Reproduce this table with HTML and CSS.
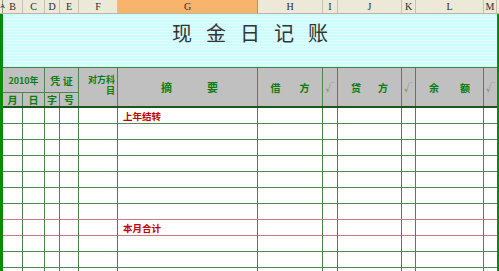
FILE: index.html
```html
<!DOCTYPE html>
<html>
<head>
<meta charset="utf-8">
<link rel="stylesheet" href="styles.css">
</head>
<body>
<div class="colbar">
  <div class="ch ch-a">A</div><div class="ch">B</div><div class="ch">C</div><div class="ch">D</div><div class="ch">E</div><div class="ch">F</div><div class="ch sel">G</div><div class="ch">H</div><div class="ch">I</div><div class="ch">J</div><div class="ch">K</div><div class="ch">L</div><div class="ch">M</div><div class="ch ch-end"></div>
</div>
<div class="sheet">
  <div class="title">现金日记账</div>
  <div class="thead">
    <div class="hc year">2010年</div>
    <div class="hc voucher">凭&nbsp;证</div>
    <div class="hc acct">对方科目</div>
    <div class="hc span2 summary"><span>摘</span><span>要</span></div>
    <div class="hc span2 money gap-h"><span>借</span><span>方</span></div>
    <div class="hc span2 tick">√</div>
    <div class="hc span2 money gap-j"><span>贷</span><span>方</span></div>
    <div class="hc span2 tick">√</div>
    <div class="hc span2 money gap-l"><span>余</span><span>额</span></div>
    <div class="hc span2 tick last">√</div>
    <div class="hc sub b">月</div>
    <div class="hc sub c">日</div>
    <div class="hc sub d">字</div>
    <div class="hc sub e">号</div>
  </div>
  <div class="tbody">
    <div class="row"><div></div><div></div><div></div><div></div><div></div><div class="memo">上年结转</div><div></div><div></div><div></div><div></div><div></div><div></div></div>
    <div class="row"><div></div><div></div><div></div><div></div><div></div><div></div><div></div><div></div><div></div><div></div><div></div><div></div></div>
    <div class="row"><div></div><div></div><div></div><div></div><div></div><div></div><div></div><div></div><div></div><div></div><div></div><div></div></div>
    <div class="row"><div></div><div></div><div></div><div></div><div></div><div></div><div></div><div></div><div></div><div></div><div></div><div></div></div>
    <div class="row"><div></div><div></div><div></div><div></div><div></div><div></div><div></div><div></div><div></div><div></div><div></div><div></div></div>
    <div class="row"><div></div><div></div><div></div><div></div><div></div><div></div><div></div><div></div><div></div><div></div><div></div><div></div></div>
    <div class="row red"><div></div><div></div><div></div><div></div><div></div><div></div><div></div><div></div><div></div><div></div><div></div><div></div></div>
    <div class="row red"><div></div><div></div><div></div><div></div><div></div><div class="memo">本月合计</div><div></div><div></div><div></div><div></div><div></div><div></div></div>
    <div class="row"><div></div><div></div><div></div><div></div><div></div><div></div><div></div><div></div><div></div><div></div><div></div><div></div></div>
    <div class="row"><div></div><div></div><div></div><div></div><div></div><div></div><div></div><div></div><div></div><div></div><div></div><div></div></div>
    <div class="row"><div></div><div></div><div></div><div></div><div></div><div></div><div></div><div></div><div></div><div></div><div></div><div></div></div>
  </div>
</div>
</body>
</html>
```
FILE: styles.css
```css
* { box-sizing: border-box; }
html, body { margin: 0; padding: 0; background: #fff; }
body { width: 499px; height: 271px; overflow: hidden; font-family: "Noto Sans CJK SC", "Liberation Sans", sans-serif; }

.colbar {
  display: grid;
  grid-template-columns: 3px 20px 22px 15px 19px 39px 140px 65px 15px 64px 14px 68px 13px 2px;
  height: 14px;
  background: #ece9d8;
  border-bottom: 1px solid #b9b6a4;
}
.ch {
  border-right: 1px solid #c6c2ae;
  font-family: "Liberation Serif", "DejaVu Serif", serif;
  font-size: 10px;
  line-height: 13px;
  color: #2a2a2a;
  text-align: center;
  overflow: hidden;
}
.ch-a { text-align: left; font-size: 7px; overflow: visible; border-right: 1px solid #9a978a; }
.ch-end { border-right: none; }
.ch.sel { background: #f8b46c; border-right-color: #b79060; }

.sheet {
  width: 499px;
  border-left: 3px solid #0a8a0a;
  border-right: 2px solid #0a8a0a;
}

.title {
  height: 53px;
  background: repeating-linear-gradient(to bottom, #cffcfc 0 2px, #e2ffff 2px 3px);
  text-align: center;
  font-size: 20px;
  line-height: 20px;
  letter-spacing: 14px;
  text-indent: 14px;
  padding-top: 9px;
  color: #333;
  font-weight: normal;
}

.thead {
  display: grid;
  grid-template-columns: 20px 22px 15px 19px 39px 140px 65px 15px 64px 14px 68px 13px;
  grid-template-rows: 25px 13px;
  background: #c0c0c0;
  border-top: 1px solid #3f7f3f;
  border-bottom: 2px solid #1f551f;
}
.hc {
  border-right: 1px solid #4f834f;
  color: #0a7d0a;
  font-weight: bold;
  display: flex;
  align-items: center;
  justify-content: center;
  font-size: 10px;
  line-height: 11px;
}
.hc.last { border-right: none; }
.year { grid-column: 1 / 3; grid-row: 1; border-bottom: 1px solid #4f834f; font-size: 9px; }
.voucher { grid-column: 3 / 5; grid-row: 1; border-bottom: 1px solid #4f834f; }
.acct { grid-column: 5; grid-row: 1 / 3; font-size: 9px; text-align: right; justify-content: flex-end; padding: 0 2px 4px 6px; }
.span2 { grid-row: 1 / 3; }
.summary { grid-column: 6; font-size: 11px; gap: 35px; padding-left: 4px; }
.money { gap: 19px; }
.gap-j { gap: 17px; }
.gap-l { gap: 21px; }
.tick { color: #6e8f6e; font-weight: normal; font-size: 9px; }
.sub { grid-row: 2; font-size: 10px; }
.sub.b { grid-column: 1; }
.sub.c { grid-column: 2; }
.sub.d { grid-column: 3; }
.sub.e { grid-column: 4; }

.row {
  display: grid;
  grid-template-columns: 20px 22px 15px 19px 39px 140px 65px 15px 64px 14px 68px 13px;
  height: 16px;
  border-bottom: 1px solid #55875a;
}
.row > div { border-right: 1px solid #4d804d; }
.row > div:last-child { border-right: none; }
.row.red { border-bottom-color: #d07880; }
.memo {
  color: #c00000;
  font-weight: bold;
  font-size: 9.5px;
  line-height: 15px;
  padding-left: 5px;
  padding-top: 1px;
}
```
